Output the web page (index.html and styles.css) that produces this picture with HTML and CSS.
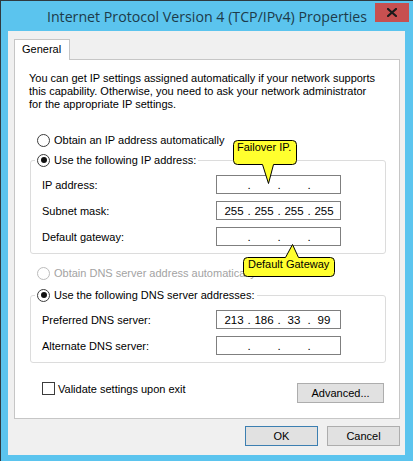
FILE: index.html
```html
<!DOCTYPE html>
<html lang="en">
<head>
<meta charset="utf-8">
<title>Internet Protocol Version 4 (TCP/IPv4) Properties</title>
<link rel="stylesheet" href="styles.css">
</head>
<body>
<div class="window">
  <div class="titlebar">
    <div class="tb-side"></div>
    <div class="title">Internet Protocol Version 4 (TCP/IPv4) Properties</div>
    <div class="tb-side tb-right">
      <button class="close" aria-label="Close">
        <svg width="10" height="9" viewBox="0 0 10 9"><path d="M1 1 L9 8 M9 1 L1 8" stroke="#1b1b1b" stroke-width="2.2" stroke-linecap="square"/></svg>
      </button>
    </div>
  </div>
  <div class="client">
    <div class="tabs"><div class="tab">General</div></div>
    <div class="panel">
      <p class="intro">You can get IP settings assigned automatically if your network supports<br>this capability. Otherwise, you need to ask your network administrator<br>for the appropriate IP settings.</p>

      <div class="radio-row top-radio"><span class="radio"></span><span>Obtain an IP address automatically</span></div>

      <fieldset class="group group-ip">
        <legend><span class="radio-row"><span class="radio checked"></span><span>Use the following IP address:</span></span></legend>
        <div class="field-row">
          <span>IP address:</span>
          <div class="ipbox"><span class="seg"></span><span class="dot">.</span><span class="seg"></span><span class="dot">.</span><span class="seg"></span><span class="dot">.</span><span class="seg"></span></div>
        </div>
        <div class="field-row">
          <span>Subnet mask:</span>
          <div class="ipbox"><span class="seg">255</span><span class="dot">.</span><span class="seg">255</span><span class="dot">.</span><span class="seg">255</span><span class="dot">.</span><span class="seg">255</span></div>
        </div>
        <div class="field-row">
          <span>Default gateway:</span>
          <div class="ipbox"><span class="seg"></span><span class="dot">.</span><span class="seg"></span><span class="dot">.</span><span class="seg"></span><span class="dot">.</span><span class="seg"></span></div>
        </div>
      </fieldset>

      <div class="radio-row dns-auto disabled"><span class="radio"></span><span>Obtain DNS server address automatically</span></div>

      <fieldset class="group group-dns">
        <legend><span class="radio-row"><span class="radio checked"></span><span>Use the following DNS server addresses:</span></span></legend>
        <div class="field-row">
          <span>Preferred DNS server:</span>
          <div class="ipbox"><span class="seg">213</span><span class="dot">.</span><span class="seg">186</span><span class="dot">.</span><span class="seg">33</span><span class="dot">.</span><span class="seg">99</span></div>
        </div>
        <div class="field-row">
          <span>Alternate DNS server:</span>
          <div class="ipbox"><span class="seg"></span><span class="dot">.</span><span class="seg"></span><span class="dot">.</span><span class="seg"></span><span class="dot">.</span><span class="seg"></span></div>
        </div>
      </fieldset>

      <div class="bottom-row">
        <div class="check-row"><span class="checkbox"></span><span>Validate settings upon exit</span></div>
        <button class="btn btn-advanced">Advanced...</button>
      </div>

      <div class="callout callout-failover">
        <svg class="callout-shape" width="66" height="46" viewBox="0 0 66 46"><path d="M5.5 1.5 H60.5 Q64.5 1.5 64.5 5.5 V21.5 Q64.5 25.5 60.5 25.5 H41.5 L36.5 44.5 L30.5 25.5 H5.5 Q1.5 25.5 1.5 21.5 V5.5 Q1.5 1.5 5.5 1.5 Z" fill="#ffff2e" stroke="#000" stroke-width="1"/></svg>
        <span class="callout-text">Failover IP.</span>
      </div>
      <div class="callout callout-gateway">
        <svg class="callout-shape" width="94" height="35" viewBox="0 0 94 35"><path d="M5.5 14.5 H43.5 L50.5 1.5 L56.5 14.5 H88.5 Q92.5 14.5 92.5 18.5 V29.5 Q92.5 33.5 88.5 33.5 H5.5 Q1.5 33.5 1.5 29.5 V18.5 Q1.5 14.5 5.5 14.5 Z" fill="#ffff2e" stroke="#000" stroke-width="1"/></svg>
        <span class="callout-text">Default Gateway</span>
      </div>
    </div>
    <div class="dialog-buttons">
      <button class="btn btn-default">OK</button>
      <button class="btn">Cancel</button>
    </div>
  </div>
</div>
</body>
</html>
```
FILE: styles.css
```css
* { box-sizing: border-box; }

html, body {
  margin: 0;
  padding: 0;
  width: 413px;
  height: 461px;
  overflow: hidden;
}

body {
  font-family: "Liberation Sans", Arial, sans-serif;
  font-size: 11px;
  color: #000;
  background: #5bc4ee;
}

.window {
  width: 413px;
  height: 461px;
  background: #5bc4ee;
  border-top: 1px solid #2f3a40;
  border-left: 1px solid #2f3a40;
  display: flex;
  flex-direction: column;
}

.titlebar {
  height: 30px;
  display: grid;
  grid-template-columns: 1fr auto 1fr;
  align-items: center;
}

.title {
  font-family: "Open Sans", "Noto Sans", sans-serif;
  font-size: 14.2px;
  color: #1d3b4a;
  white-space: nowrap;
  line-height: 30px;
  padding-top: 1px;
}

.tb-right {
  display: flex;
  justify-content: flex-end;
  align-self: start;
  padding-top: 2px;
  padding-right: 4px;
}

.close {
  width: 34px;
  height: 19px;
  background: #c75050;
  border: none;
  padding: 0;
  display: flex;
  align-items: center;
  justify-content: center;
}

.client {
  flex: 1;
  margin: 0 8px 6px 7px;
  background: #f0f0f0;
  display: flex;
  flex-direction: column;
  padding: 8px 5px 9px 6px;
}

.tabs {
  display: flex;
  position: relative;
  z-index: 1;
  margin-bottom: -1px;
}

.tab {
  height: 21px;
  padding: 0 8px 0 7px;
  background: #fff;
  border: 1px solid #c6c6c6;
  border-bottom: none;
  line-height: 19px;
}

.panel {
  position: relative;
  background: #fff;
  border: 1px solid #c6c6c6;
  padding: 12px 13px 15px 14px;
  display: flex;
  flex-direction: column;
}

.intro {
  margin: 0;
  line-height: 13px;
  white-space: nowrap;
}

.radio-row {
  display: flex;
  align-items: center;
  gap: 4px;
  height: 16px;
  white-space: nowrap;
}

.top-radio {
  margin: 21px 0 0 8px;
}

.dns-auto {
  margin: 11px 0 0 8px;
}

.disabled {
  color: #a3a3a3;
}

.radio {
  width: 13px;
  height: 13px;
  border: 1px solid #3c3c3c;
  border-radius: 50%;
  background: #fff;
  display: flex;
  align-items: center;
  justify-content: center;
  flex: none;
}

.disabled .radio {
  border-color: #bcbcbc;
}

.radio.checked::after {
  content: "";
  width: 6px;
  height: 6px;
  border-radius: 50%;
  background: #111;
}

.group {
  margin: 4px 0 0 1px;
  padding: 7px 0 7px 11px;
  border: 1px solid #dcdcdc;
  border-radius: 3px;
  display: flex;
  flex-direction: column;
  gap: 7px;
  min-width: 0;
}

.group-dns {
  margin-top: 6px;
}

.group legend {
  margin-left: -7px;
  padding: 0 2px;
}

.field-row {
  display: grid;
  grid-template-columns: 174px 125px;
  align-items: center;
  height: 19px;
}

.ipbox {
  height: 19px;
  border: 1px solid #7f7f7f;
  background: #fff;
  display: flex;
  align-items: center;
  padding-left: 5px;
  font-size: 11.5px;
}

.seg {
  width: 24px;
  text-align: center;
}

.dot {
  width: 6px;
  text-align: center;
}

.bottom-row {
  margin: 19px 2px 0 13px;
  display: flex;
  justify-content: space-between;
  align-items: flex-start;
}

.check-row {
  display: flex;
  align-items: center;
  gap: 3px;
  height: 13px;
}

.checkbox {
  width: 13px;
  height: 13px;
  border: 1px solid #3c3c3c;
  background: #fff;
}

.btn {
  font-family: inherit;
  font-size: 11px;
  color: #000;
  background: #e1e1e1;
  border: 1px solid #adadad;
  height: 20px;
  padding: 0;
  line-height: 18px;
}

.btn-advanced {
  width: 87px;
  margin-top: 1px;
}

.dialog-buttons {
  margin-top: 7px;
  display: flex;
  justify-content: flex-end;
  gap: 9px;
}

.dialog-buttons .btn {
  width: 73px;
}

.btn-default {
  border-color: #3c7fb1;
}

.callout {
  position: absolute;
  font-family: "Liberation Sans", Arial, sans-serif;
  font-size: 11px;
  line-height: 13px;
  color: #000;
  z-index: 2;
}

.callout-shape {
  position: absolute;
  left: 0;
  top: 0;
}

.callout-text {
  position: relative;
  white-space: nowrap;
}

.callout-failover {
  left: 217px;
  top: 79px;
  width: 66px;
  height: 46px;
  padding: 2px 0 0 5px;
}

.callout-gateway {
  left: 227px;
  top: 183px;
  width: 94px;
  height: 35px;
  padding: 15px 0 0 6px;
}
```
